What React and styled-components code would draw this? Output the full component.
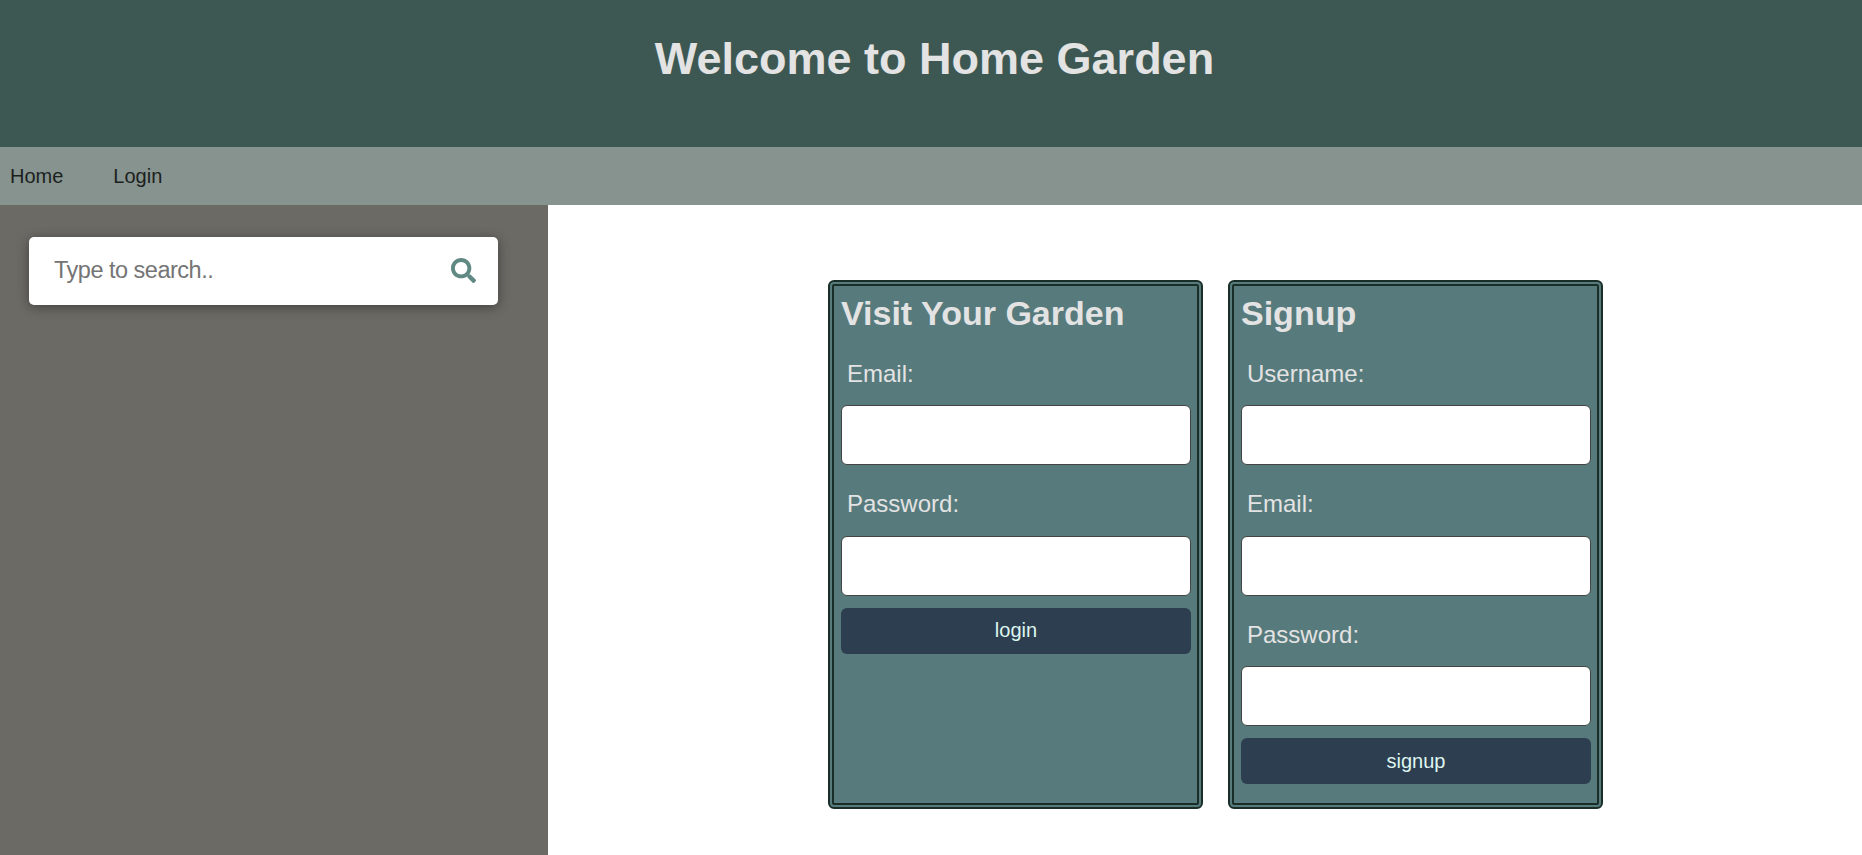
import React from "react";
import styled, { createGlobalStyle } from "styled-components";

const GlobalStyle = createGlobalStyle`
  * { box-sizing: border-box; }
  html, body { margin: 0; padding: 0; }
  body {
    background: #fff;
    font-family: "Liberation Sans", Arial, Helvetica, sans-serif;
    overflow: hidden;
  }
`;

const Page = styled.div`
  display: flex;
  flex-direction: column;
  height: 100vh;
`;

const Header = styled.header`
  flex: none;
  height: 147px;
  padding-top: 33px;
  background: #3d5852;
  text-align: center;
`;

const Title = styled.h1`
  margin: 0;
  padding-left: 7px;
  color: #e3e3e3;
  font-size: 45px;
  line-height: 52px;
`;

const Nav = styled.nav`
  display: flex;
  flex: none;
  align-items: center;
  gap: 50px;
  height: 58px;
  padding-left: 10px;
  background: #86938e;
`;

const NavLink = styled.a`
  color: #1c1f1e;
  font-size: 20px;
  line-height: 24px;
  text-decoration: none;
`;

const Body = styled.div`
  display: flex;
  flex: 1;
  min-height: 0;
`;

const Sidebar = styled.aside`
  flex: none;
  width: 548px;
  padding: 32px 50px 0 29px;
  background: #6b6a65;
`;

const SearchBox = styled.form`
  display: flex;
  align-items: center;
  height: 68px;
  padding: 0 22px 2px 25px;
  border-radius: 5px;
  background: #fff;
  box-shadow: 0 2px 12px rgba(0, 0, 0, 0.4);
`;

const SearchInput = styled.input`
  flex: 1;
  min-width: 0;
  padding: 0;
  border: 0;
  outline: 0;
  background: transparent;
  font-family: inherit;
  font-size: 23.5px;
  letter-spacing: -0.5px;
  line-height: 28px;

  &::placeholder {
    color: #757575;
    opacity: 1;
  }
`;

const SearchIcon = styled.svg`
  flex: none;
  width: 25px;
  height: 25px;
  fill: #5f8982;
`;

const Main = styled.main`
  display: flex;
  flex: 1;
  align-items: flex-start;
  gap: 25px;
  padding: 75px 0 0 280px;
`;

const Card = styled.form`
  flex: none;
  width: 375px;
  height: 529px;
  padding: 7px 6px 0 7px;
  border: 6px double #1a2e28;
  border-radius: 6px;
  background: #577a7c;
`;

const CardTitle = styled.h2`
  margin: 0;
  color: #e3e3e3;
  font-size: 34px;
  line-height: 41.5px;
`;

const Field = styled.label`
  display: flex;
  flex-direction: column;
  justify-content: flex-end;
  height: 130.5px;
`;

const FieldLabel = styled.span`
  margin: 0 0 17.1px 6px;
  color: #e3e3e3;
  font-size: 24px;
  line-height: 28px;
`;

const FieldInput = styled.input`
  width: 100%;
  height: 60px;
  padding: 0 12px;
  border: 1px solid #444;
  border-radius: 6px;
  outline: 0;
  background: #fff;
  font: inherit;
`;

const SubmitButton = styled.button`
  display: block;
  width: 100%;
  height: 46px;
  margin-top: 12px;
  padding: 0;
  border: 0;
  border-radius: 6px;
  background: #2c3e50;
  color: #def5ef;
  font-family: inherit;
  font-size: 20px;
`;

function FormCard({ title, fields, action }) {
  return (
    <Card onSubmit={(e) => e.preventDefault()}>
      <CardTitle>{title}</CardTitle>
      {fields.map((name) => (
        <Field key={name}>
          <FieldLabel>{name}:</FieldLabel>
          <FieldInput type={name === "Password" ? "password" : "text"} />
        </Field>
      ))}
      <SubmitButton type="submit">{action}</SubmitButton>
    </Card>
  );
}

export default function App() {
  return (
    <Page>
      <GlobalStyle />
      <Header>
        <Title>Welcome to Home Garden</Title>
      </Header>
      <Nav>
        <NavLink href="#home">Home</NavLink>
        <NavLink href="#login">Login</NavLink>
      </Nav>
      <Body>
        <Sidebar>
          <SearchBox onSubmit={(e) => e.preventDefault()}>
            <SearchInput type="text" placeholder="Type to search.." />
            <SearchIcon viewBox="0 0 512 512" aria-hidden="true">
              <path d="M505 442.7L405.3 343c-4.500-4.500-10.600-7-17-7H372c27.600-35.300 44-79.700 44-128C416 93.100 322.900 0 208 0S0 93.100 0 208s93.100 208 208 208c48.300 0 92.700-16.400 128-44v16.300c0 6.400 2.500 12.500 7 17l99.700 99.700c9.400 9.400 24.600 9.400 33.900 0l28.300-28.300c9.400-9.400 9.400-24.600.1-34zM208 336c-70.700 0-128-57.200-128-128 0-70.700 57.200-128 128-128 70.700 0 128 57.200 128 128 0 70.700-57.200 128-128 128z" />
            </SearchIcon>
          </SearchBox>
        </Sidebar>
        <Main>
          <FormCard title="Visit Your Garden" fields={["Email", "Password"]} action="login" />
          <FormCard title="Signup" fields={["Username", "Email", "Password"]} action="signup" />
        </Main>
      </Body>
    </Page>
  );
}
